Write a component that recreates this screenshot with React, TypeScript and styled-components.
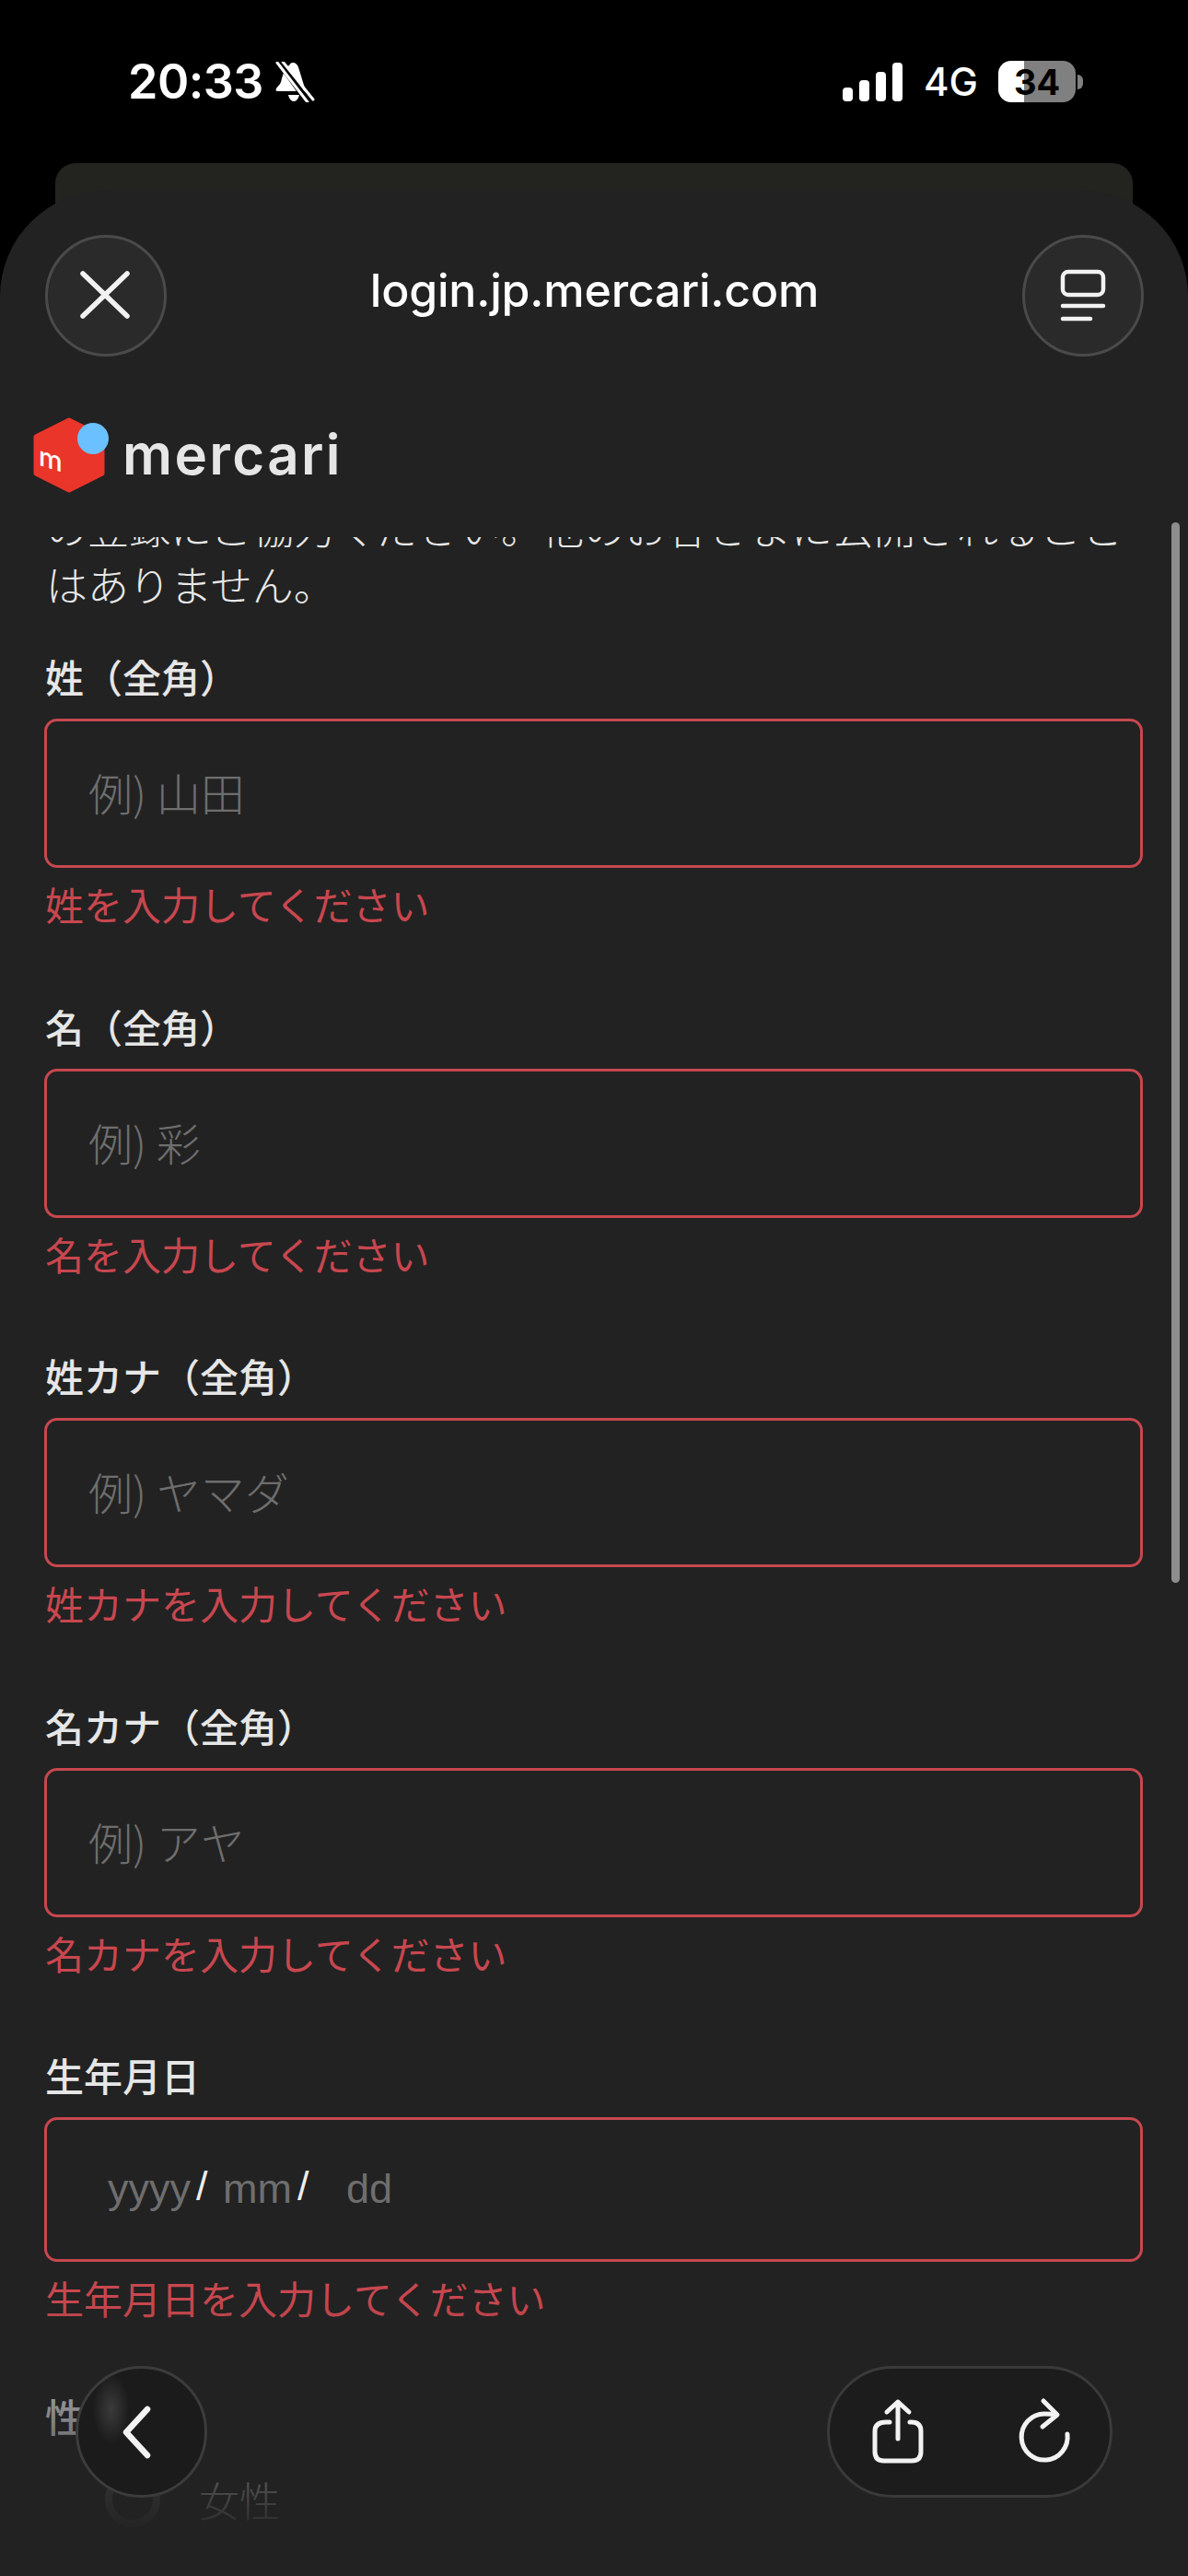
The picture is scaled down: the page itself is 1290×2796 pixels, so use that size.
import React, { FC } from 'react';
import styled, { createGlobalStyle } from 'styled-components';

const JP = `"Noto Sans CJK JP", "Noto Sans", sans-serif`;
const UI = `Inter, "Liberation Sans", sans-serif`;

const GlobalStyle = createGlobalStyle`
  html, body { margin: 0; padding: 0; background: #000; }
  * { box-sizing: border-box; }
`;

const Screen = styled.div`
  position: relative;
  width: 1290px;
  height: 2796px;
  overflow: hidden;
  background: #000;
  display: flex;
  flex-direction: column;
  font-family: ${JP};
`;

/* status bar */
const StatusBar = styled.div`
  height: 177px;
  flex: none;
  display: flex;
  align-items: center;
  justify-content: space-between;
  padding: 0 114px 0 139px;
  color: #fff;
  font-family: ${UI};
`;
const StatusLeft = styled.div`
  display: flex;
  align-items: center;
  gap: 12px;
`;
const Time = styled.div`
  font-size: 52px;
  font-weight: 600;
  letter-spacing: -0.5px;
`;
const StatusRight = styled.div`
  display: flex;
  align-items: center;
`;
const Network = styled.div`
  font-size: 42px;
  font-weight: 500;
  margin: 0 22px;
`;
const Battery = styled.div`
  width: 84px;
  height: 45px;
  border-radius: 14px;
  background: linear-gradient(90deg, #fff 33%, #808080 33%);
  color: #000;
  font-size: 38px;
  font-weight: 700;
  display: flex;
  align-items: center;
  justify-content: center;
`;
const BatteryCap = styled.div`
  width: 6px;
  height: 16px;
  margin-left: 2px;
  border-radius: 0 6px 6px 0;
  background: #808080;
`;

/* sheets */
const BackCard = styled.div`
  flex: none;
  height: 60px;
  margin: 0 60px -30px;
  border-radius: 22px 22px 0 0;
  background: #23241f;
`;
const Sheet = styled.div`
  position: relative;
  flex: 1;
  min-height: 0;
  display: flex;
  flex-direction: column;
  border-radius: 115px 115px 0 0;
  background: #222;
  overflow: hidden;
`;
const NavBar = styled.div`
  flex: none;
  display: flex;
  align-items: center;
  justify-content: space-between;
  padding: 48px 48px 0 49px;
`;
const RoundButton = styled.div`
  width: 132px;
  height: 132px;
  border-radius: 50%;
  border: 3px solid #4a4a4a;
  background: #2a2a2a;
  display: flex;
  align-items: center;
  justify-content: center;
`;
const CloseIcon = styled.svg`
  margin: -3px 3px 0 0;
`;
const Host = styled.div`
  color: #fff;
  font-family: ${UI};
  font-size: 50px;
  font-weight: 500;
  letter-spacing: -0.2px;
  margin-top: -12px;
`;

const LogoBar = styled.div`
  flex: none;
  height: 196px;
  padding: 66px 0 0 36px;
  display: flex;
  align-items: flex-start;
`;
const Wordmark = styled.span`
  margin: 4px 0 0 15px;
  color: #e6e6e6;
  font-family: ${UI};
  font-size: 60px;
  font-weight: 600;
  line-height: 72px;
  letter-spacing: 2.4px;
`;

/* form */
const Scroller = styled.div`
  position: relative;
  flex: 1;
  min-height: 0;
  overflow: hidden;
  padding: 0 49px 0 48px;
`;
const Intro = styled.p`
  margin: -42px 0 43px 2px;
  color: #e8e8e8;
  font-size: 45px;
  font-weight: 300;
  line-height: 62px;
  white-space: nowrap;
`;
const Field = styled.div`
  margin-bottom: 73.5px;
`;
const GenderField = styled(Field)`
  margin-top: -5px;
`;
const Label = styled.div`
  padding: 0 0 4px 1px;
  height: 60px;
  color: #e6e6e6;
  font-size: 42px;
  font-weight: 500;
  line-height: 52px;
  margin-bottom: 12px;
`;
const InputBox = styled.div<{ $short?: boolean }>`
  height: ${(p) => (p.$short ? 157 : 162)}px;
  border: 3px solid #c8474f;
  border-radius: 14px;
  display: flex;
  align-items: center;
  padding: 0 0 4px 45px;
  color: #6e6e6e;
  font-size: 48px;
  font-weight: 300;
`;
const DateBox = styled(InputBox)`
  padding: 0 0 2px 66px;
  font-family: "Liberation Sans", Arial, sans-serif;
  font-size: 45px;
  font-weight: 400;
`;
const DatePart = styled.span<{ $width: number }>`
  flex: none;
  width: ${(p) => p.$width}px;
`;
const Slash = styled.span`
  flex: none;
  width: 29px;
  color: #eee;
  margin-top: -6px;
`;
const ErrorText = styled.div`
  padding: 0 0 3px 1px;
  margin-top: 9px;
  color: #c8474f;
  font-size: 42px;
  font-weight: 400;
  line-height: 60px;
`;
const RadioRow = styled.div`
  display: flex;
  align-items: center;
  gap: 42px;
  padding: 13px 0 0 66px;
`;
const Radio = styled.div`
  width: 60px;
  height: 60px;
  border-radius: 50%;
  border: 8px solid #5e5e5e;
`;
const RadioLabel = styled.span`
  color: #eee;
  font-size: 44px;
  font-weight: 300;
`;
const ScrollThumb = styled.div`
  position: absolute;
  top: 360px;
  right: 9px;
  width: 9px;
  height: 1151px;
  border-radius: 5px;
  background: #8e8e8e;
`;

/* floating toolbar */
const BottomFade = styled.div`
  position: absolute;
  left: 0;
  right: 0;
  bottom: 0;
  height: 301px;
  background: linear-gradient(180deg, rgba(34, 34, 34, 0) 0%, #222 86%);
`;
const BackButton = styled.div`
  position: absolute;
  left: 82px;
  bottom: 85px;
  width: 143px;
  height: 143px;
  border-radius: 50%;
  border: 3px solid #3c3c3c;
  background: radial-gradient(ellipse 20px 38px at 26% 32%, #3b3b3b, rgba(59, 59, 59, 0)), #1b1b1b;
  display: flex;
  align-items: center;
  justify-content: center;
`;
const BackChevron = styled.svg`
  margin-right: 10px;
`;
const ActionPill = styled.div`
  position: absolute;
  left: 898px;
  bottom: 85px;
  width: 310px;
  height: 143px;
  border-radius: 72px;
  border: 3px solid #3a3a3a;
  background: #1c1c1c;
  display: flex;
  align-items: center;
  justify-content: center;
  gap: 30px;
  padding-left: 3px;
`;
const ActionSlot = styled.div`
  width: 130px;
  display: flex;
  justify-content: center;
`;

const Icon = styled.svg`
  display: block;
  fill: none;
  stroke: #f2f2f2;
  stroke-linecap: round;
  stroke-linejoin: round;
`;

const BellSlash: FC = () => (
  <svg width="44" height="44" viewBox="0 0 44 44">
    <path d="M20 1c3 0 5 2 6 5l8 26H3c-1 0-2-1-1-3 2-3 5-4 6-11l2-6c1-4 3-7 6-8 1-2 2-3 4-3z" fill="#fff" />
    <path d="M15 36h12c-1 4-3 7-6 7s-5-3-6-7z" fill="#fff" />
    <path d="M6 1l30 42" stroke="#000" strokeWidth="7" />
    <path d="M3 1l33 43" stroke="#fff" strokeWidth="3" strokeLinecap="round" />
    <path d="M9 0l33 41" stroke="#fff" strokeWidth="3" strokeLinecap="round" />
  </svg>
);

const SignalBars: FC = () => (
  <svg width="66" height="42" viewBox="0 0 66 42" fill="#fff">
    <rect x="0" y="27" width="11" height="15" rx="4" />
    <rect x="18" y="19" width="11" height="23" rx="4" />
    <rect x="36" y="10" width="11" height="32" rx="4" />
    <rect x="54" y="0" width="11" height="42" rx="4" />
  </svg>
);

const MercariMark: FC = () => (
  <svg width="82" height="82" viewBox="0 0 82 82">
    <path
      d="M39 3L75 21V61L39 79L3 61V21Z"
      fill="#ea352a"
      stroke="#ea352a"
      strokeWidth="5"
      strokeLinejoin="round"
    />
    <circle cx="65" cy="23" r="17" fill="#6bc1ff" />
    <text x="6" y="50" transform="skewY(17)" fill="#fff" fontFamily={UI} fontSize="29" fontWeight="500">
      m
    </text>
  </svg>
);

interface IFormField {
  name: string;
  sample: string;
}

const nameFields: IFormField[] = [
  { name: '姓', sample: '例) 山田' },
  { name: '名', sample: '例) 彩' },
  { name: '姓カナ', sample: '例) ヤマダ' },
  { name: '名カナ', sample: '例) アヤ' },
];

export default function App() {
  return (
    <Screen>
      <GlobalStyle />
      <StatusBar>
        <StatusLeft>
          <Time>20:33</Time>
          <BellSlash />
        </StatusLeft>
        <StatusRight>
          <SignalBars />
          <Network>4G</Network>
          <Battery>34</Battery>
          <BatteryCap />
        </StatusRight>
      </StatusBar>
      <BackCard />
      <Sheet>
        <NavBar>
          <RoundButton>
            <CloseIcon as={Icon} width="56" height="54" viewBox="0 0 56 54" strokeWidth="5.5">
              <path d="M4 4l48 46M52 4L4 50" />
            </CloseIcon>
          </RoundButton>
          <Host>login.jp.mercari.com</Host>
          <RoundButton>
            <Icon width="50" height="58" viewBox="0 0 50 58" strokeWidth="4.5">
              <rect x="3" y="3" width="44" height="25" rx="6" />
              <path d="M3 40h44M3 54h30" />
            </Icon>
          </RoundButton>
        </NavBar>
        <LogoBar>
          <MercariMark />
          <Wordmark>mercari</Wordmark>
        </LogoBar>
        <Scroller>
          <Intro>
            の登録にご協力ください。他のお客さまに公開されること
            <br />
            はありません。
          </Intro>
          {nameFields.map((field) => (
            <Field key={field.name}>
              <Label>{field.name}（全角）</Label>
              <InputBox>{field.sample}</InputBox>
              <ErrorText>{field.name}を入力してください</ErrorText>
            </Field>
          ))}
          <Field>
            <Label>生年月日</Label>
            <DateBox $short>
              <DatePart $width={96}>yyyy</DatePart>
              <Slash>/</Slash>
              <DatePart $width={81}>mm</DatePart>
              <Slash>/</Slash>
              <DatePart $width={24} />
              <DatePart $width={60}>dd</DatePart>
            </DateBox>
            <ErrorText>生年月日を入力してください</ErrorText>
          </Field>
          <GenderField>
            <Label>性別</Label>
            <RadioRow>
              <Radio />
              <RadioLabel>女性</RadioLabel>
            </RadioRow>
          </GenderField>
        </Scroller>
        <ScrollThumb />
      </Sheet>
      <BottomFade />
      <BackButton>
        <BackChevron as={Icon} width="40" height="62" viewBox="0 0 40 62" strokeWidth="6.5">
          <path d="M31 6L8 31l23 25" />
        </BackChevron>
      </BackButton>
      <ActionPill>
        <ActionSlot>
          <Icon width="70" height="78" viewBox="0 0 70 78" strokeWidth="5">
            <path d="M26 28h-4Q10 28 10 38v22q0 10 10 10h30q10 0 10-10V38q0-10-10-10h-2" />
            <path d="M35 46V6M23 17L35 6l12 11" />
          </Icon>
        </ActionSlot>
        <ActionSlot>
          <Icon width="70" height="78" viewBox="0 0 70 78" strokeWidth="5">
            <path d="M59 41A25 25 0 1 1 34 19C40 19 44 19.5 47 20" />
            <path d="M33 5l15 15-16 13" />
          </Icon>
        </ActionSlot>
      </ActionPill>
    </Screen>
  );
}
